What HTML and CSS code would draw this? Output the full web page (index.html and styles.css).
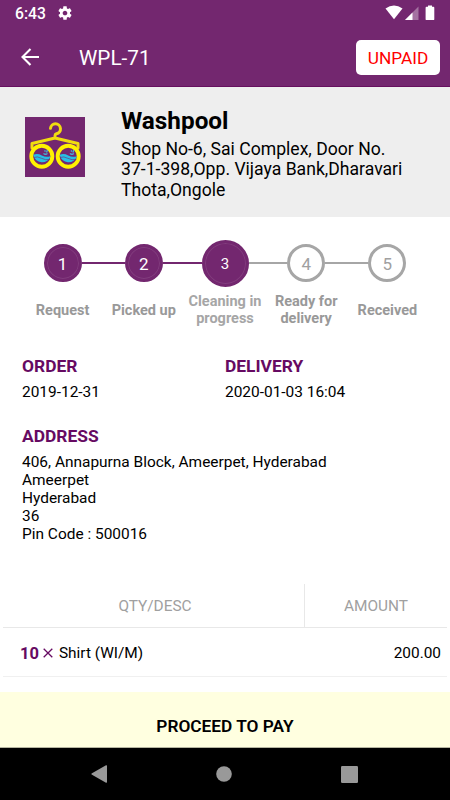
FILE: index.html
```html
<!DOCTYPE html>
<html lang="en">
<head>
  <meta charset="UTF-8" />
  <meta name="viewport" content="width=device-width, initial-scale=1.0"/>
  <title>WPL-71</title>
  <link rel="stylesheet" href="styles.css">
</head>
<body>
  <header>
    <div class="status-bar">
      <span class="time">6:43</span>
      <svg class="gear" width="16" height="16" viewBox="0 0 24 24"><path fill="#fff" d="M19.43 12.98c.04-.32.07-.64.07-.98s-.03-.66-.07-.98l2.11-1.65c.19-.15.24-.42.12-.64l-2-3.46c-.12-.22-.39-.3-.61-.22l-2.49 1c-.52-.4-1.08-.73-1.69-.98l-.38-2.65C14.46 2.18 14.25 2 14 2h-4c-.25 0-.46.18-.49.42l-.38 2.65c-.61.25-1.17.59-1.69.98l-2.49-1c-.23-.09-.49 0-.61.22l-2 3.46c-.13.22-.07.49.12.64l2.11 1.65c-.04.32-.07.65-.07.98s.03.66.07.98l-2.11 1.65c-.19.15-.24.42-.12.64l2 3.46c.12.22.39.3.61.22l2.49-1c.52.4 1.08.73 1.69.98l.38 2.65c.03.24.24.42.49.42h4c.25 0 .46-.18.49-.42l.38-2.65c.61-.25 1.17-.59 1.69-.98l2.49 1c.23.09.49 0 .61-.22l2-3.46c.12-.22.07-.49-.12-.64l-2.11-1.65zM12 15.5c-1.930 0-3.500-1.570-3.500-3.500s1.570-3.500 3.500-3.500 3.500 1.570 3.500 3.500-1.570 3.500-3.500 3.500z"/></svg>
      <svg class="signals" width="52" height="16" viewBox="0 0 52 16">
        <path fill="#fff" d="M0.500 3.600Q9 -2.400 17.500 3.600L9 14.300z"/>
        <path fill="#fff" fill-opacity=".35" d="M33.500 1.500V15H20z"/>
        <path fill="#fff" d="M27.500 7.500V15H20z"/>
        <path fill="#fff" d="M43 .5h4v1.300h1.400q.9 0 .9.900v11.500q0 .9-.9.900h-6.900q-.9 0-.9-.9V2.700q0-.9.900-.9H43z"/>
      </svg>
    </div>
    <nav>
      <svg class="back" width="18" height="18" viewBox="0 0 18 18"><path d="M18 9H1.500M9.500 1L1.500 9l8 8" fill="none" stroke="#fff" stroke-width="2.100"/></svg>
      <h1>WPL-71</h1>
      <span class="badge">UNPAID</span>
    </nav>
  </header>

  <section class="shop">
    <svg class="logo" width="60" height="60" viewBox="0 0 60 60">
      <rect width="60" height="60" fill="#73276f"/>
      <g fill="none" stroke="#fff200" stroke-linecap="round" stroke-linejoin="round">
        <path stroke="#f0dc10" stroke-width="3" d="M25.500 11.300a5 5 0 1 1 6 5.400q-1.500.6-1.500 2V21M30 21L7 26.500V31M30 21l23 5.500V31"/>
        <circle cx="16.800" cy="39.200" r="10.500" stroke-width="3.900"/>
        <circle cx="43.200" cy="39.200" r="10.500" stroke-width="3.900"/>
      </g>
      <g id="water">
        <path fill="#27bfe6" d="M8.300 37.800q4-2 8.500.6t8.900.6A9 9 0 0 1 8.300 37.800z"/>
        <path d="M8.500 40.500q4-1.500 8 .8t8.500 1" fill="none" stroke="#73276f" stroke-width=".6"/>
        <path d="M18.500 36.500q2 1.500 4 0M19.500 33.500l1 1M22.500 33l-1 2.500" fill="none" stroke="#45b7dc" stroke-width="1.300"/>
      </g>
      <use href="#water" x="26.400"/>
    </svg>
    <div>
      <h2>Washpool</h2>
      <p>Shop No-6, Sai Complex, Door No.<br>37-1-398,Opp. Vijaya Bank,Dharavari<br>Thota,Ongole</p>
    </div>
  </section>

  <ol class="steps">
    <li class="done"><div class="track"><span>1</span></div><p>Request</p></li>
    <li class="done"><div class="track"><span>2</span></div><p>Picked up</p></li>
    <li class="done current"><div class="track"><span>3</span></div><p>Cleaning in<br>progress</p></li>
    <li><div class="track"><span>4</span></div><p>Ready for<br>delivery</p></li>
    <li><div class="track"><span>5</span></div><p>Received</p></li>
  </ol>

  <section class="details">
    <div>
      <h3>ORDER</h3>
      <p>2019-12-31</p>
    </div>
    <div>
      <h3>DELIVERY</h3>
      <p>2020-01-03 16:04</p>
    </div>
    <div class="address">
      <h3>ADDRESS</h3>
      <p>406, Annapurna Block, Ameerpet, Hyderabad<br>Ameerpet<br>Hyderabad<br>36<br>Pin Code : 500016</p>
    </div>
  </section>

  <section class="items">
    <div class="items-head">
      <span class="desc">QTY/DESC</span>
      <span class="amount">AMOUNT</span>
    </div>
    <div class="item">
      <b>10</b>
      <svg width="10" height="10" viewBox="0 0 10 10"><path d="M.7.700l8.600 8.600M9.300.700L.700 9.300" stroke="#660a62" stroke-width="1.300"/></svg>
      <span>Shirt (WI/M)</span>
      <span class="price">200.00</span>
    </div>
  </section>

  <button class="pay">PROCEED TO PAY</button>

  <footer>
    <svg width="16" height="18" viewBox="0 0 16 18"><path fill="#999" d="M15 .3Q16 0 16 1v16q0 1-1 .7L.6 9.500Q0 9 .6 8.500z"/></svg>
    <svg width="16" height="16" viewBox="0 0 16 16"><circle cx="8" cy="8" r="7.800" fill="#999"/></svg>
    <svg width="17" height="17" viewBox="0 0 17 17"><rect width="17" height="17" rx="1.200" fill="#999"/></svg>
  </footer>
</body>
</html>
```
FILE: styles.css
```css
* {
  box-sizing: border-box;
}

body {
  font-family: Roboto, sans-serif;
  background: #fff;
  color: #000;
  margin: 0;
  height: 800px;
  display: flex;
  flex-direction: column;
  overflow: hidden;
}

h1, h2, h3, p {
  margin: 0;
}

svg {
  display: block;
  flex: none;
}

header {
  height: 87px;
  background: #73276f;
  border-bottom: 1px solid #66105f;
  color: #fff;
}

.status-bar {
  display: flex;
  height: 28px;
  padding: 5px 13px 0 15px;
}

.time {
  width: 42px;
  font-size: 15.7px;
  font-weight: 500;
  line-height: 18px;
}

.signals {
  margin-left: auto;
}

nav {
  display: flex;
  align-items: center;
  height: 58px;
  padding: 0 10px 0 21px;
}

nav h1 {
  margin-left: 40px;
  padding-top: 2px;
  font-size: 20.7px;
  font-weight: 400;
}

.badge {
  display: flex;
  align-items: center;
  justify-content: center;
  width: 84px;
  height: 35px;
  margin-left: auto;
  padding-top: 1px;
  border-radius: 5px;
  background: #fff;
  color: #f00;
  font-size: 17.3px;
}

.shop {
  display: flex;
  gap: 36px;
  height: 130px;
  padding: 19px 0 0 25px;
  background: #eee;
}

.logo {
  margin-top: 11px;
}

.shop h2 {
  font-size: 24.3px;
  line-height: 30px;
}

.shop p {
  margin-top: 3px;
  font-size: 17.6px;
  line-height: 20.4px;
  white-space: nowrap;
}

.steps {
  display: grid;
  grid-template-columns: repeat(5, 1fr);
  height: 134px;
  margin: 0;
  padding: 22px 22px 0;
  list-style: none;
}

.track {
  display: flex;
  align-items: center;
  height: 48px;
}

.track::before,
.track::after {
  content: "";
  flex: 1;
  height: 2px;
  background: #a6a6a6;
}

.done .track::before,
.done:not(.current) .track::after {
  background: #73276f;
}

li:first-child .track::before,
li:last-child .track::after {
  visibility: hidden;
}

.track span {
  display: flex;
  align-items: center;
  justify-content: center;
  width: 38px;
  height: 38px;
  padding-top: 1px;
  border: 3px solid #a6a6a6;
  border-radius: 50%;
  color: #a0a0a0;
  font-size: 17px;
}

.done .track span {
  border-color: #73276f;
  background: #73276f;
  box-shadow: inset 0 0 0 1px #823d7e;
  color: #fff;
}

.current .track span {
  width: 47px;
  height: 47px;
  font-size: 15px;
}

.steps p {
  display: flex;
  align-items: center;
  justify-content: center;
  height: 36px;
  margin-top: 5px;
  color: #999;
  font-size: 14.5px;
  font-weight: 700;
  line-height: 17px;
  text-align: center;
  white-space: nowrap;
}

.current p {
  color: #a6a6a6;
}

.details {
  display: grid;
  grid-template-columns: 203px 1fr;
  grid-template-rows: 70px 1fr;
  height: 233px;
  padding: 5px 22px 0;
}

.details h3 {
  color: #660a62;
  font-size: 17.4px;
  line-height: 21px;
}

.details p {
  margin-top: 6px;
  font-size: 15.45px;
  line-height: 18px;
}

.address {
  grid-column: span 2;
}

.items {
  height: 108px;
  padding: 0 3px;
}

.items-head {
  display: flex;
  height: 44px;
  line-height: 44px;
  border-bottom: 1px solid #e8e8e8;
  color: #a0a0a0;
  font-size: 15.4px;
  text-align: center;
}

.desc {
  width: 302px;
  padding-left: 3px;
  border-right: 1px solid #e8e8e8;
}

.amount {
  flex: 1;
}

.item {
  display: flex;
  align-items: center;
  height: 49px;
  padding: 2px 6px 0 17px;
  border-bottom: 1px solid #f0f0f0;
  font-size: 15.4px;
}

.item b {
  color: #660a62;
  font-size: 16.5px;
}

.item svg {
  margin: 0 6px 0 4px;
}

.price {
  margin-left: auto;
}

.pay {
  height: 56px;
  padding: 13px 0 0;
  border: none;
  border-bottom: 1px solid #b5b5a0;
  background: #ffffe0;
  color: #000;
  font-family: inherit;
  font-size: 17.3px;
  font-weight: 600;
}

footer {
  display: flex;
  align-items: center;
  justify-content: space-between;
  flex: 1;
  padding: 0 92px 0 91px;
  background: #000;
}
```
